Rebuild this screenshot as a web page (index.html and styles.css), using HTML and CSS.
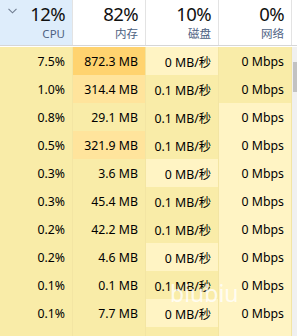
FILE: index.html
```html
<!DOCTYPE html>
<html lang="zh-CN">
<head>
    <meta charset="UTF-8">
    <meta name="viewport" content="width=device-width, initial-scale=1.0">
    <title>任务管理器 - 进程</title>
    <link rel="stylesheet" href="styles.css">
</head>
<body>
    <div class="table">
        <div class="head">
            <div class="head-cell sorted">
                <svg class="chevron" width="9" height="6" viewBox="0 0 9 6">
                    <path d="M0.5 0.8 L4.5 4.8 L8.5 0.8" fill="none" stroke="#6f7c90" stroke-width="1.1"/>
                </svg>
                <span class="pct">12%</span>
                <span class="label">CPU</span>
            </div>
            <div class="head-cell">
                <span class="pct">82%</span>
                <span class="label">内存</span>
            </div>
            <div class="head-cell">
                <span class="pct">10%</span>
                <span class="label">磁盘</span>
            </div>
            <div class="head-cell">
                <span class="pct">0%</span>
                <span class="label">网络</span>
            </div>
            <div class="head-rest"></div>
        </div>

        <div class="body">
            <div class="rows">
                <div class="row">
                    <div class="cell h1">7.5%</div>
                    <div class="cell h3">872.3 MB</div>
                    <div class="cell h0">0 MB/秒</div>
                    <div class="cell h1">0 Mbps</div>
                </div>
                <div class="row">
                    <div class="cell h1">1.0%</div>
                    <div class="cell h2">314.4 MB</div>
                    <div class="cell h1">0.1 MB/秒</div>
                    <div class="cell h1">0 Mbps</div>
                </div>
                <div class="row">
                    <div class="cell h1">0.8%</div>
                    <div class="cell h1">29.1 MB</div>
                    <div class="cell h1">0.1 MB/秒</div>
                    <div class="cell h0">0 Mbps</div>
                </div>
                <div class="row">
                    <div class="cell h1">0.5%</div>
                    <div class="cell h2">321.9 MB</div>
                    <div class="cell h1">0.1 MB/秒</div>
                    <div class="cell h0">0 Mbps</div>
                </div>
                <div class="row">
                    <div class="cell h1">0.3%</div>
                    <div class="cell h1">3.6 MB</div>
                    <div class="cell h0">0 MB/秒</div>
                    <div class="cell h0">0 Mbps</div>
                </div>
                <div class="row">
                    <div class="cell h1">0.3%</div>
                    <div class="cell h1">45.4 MB</div>
                    <div class="cell h1">0.1 MB/秒</div>
                    <div class="cell h0">0 Mbps</div>
                </div>
                <div class="row">
                    <div class="cell h1">0.2%</div>
                    <div class="cell h1">42.2 MB</div>
                    <div class="cell h1">0.1 MB/秒</div>
                    <div class="cell h0">0 Mbps</div>
                </div>
                <div class="row">
                    <div class="cell h1">0.2%</div>
                    <div class="cell h1">4.6 MB</div>
                    <div class="cell h0">0 MB/秒</div>
                    <div class="cell h0">0 Mbps</div>
                </div>
                <div class="row">
                    <div class="cell h1">0.1%</div>
                    <div class="cell h1">0.1 MB</div>
                    <div class="cell h1">0.1 MB/秒</div>
                    <div class="cell h0">0 Mbps</div>
                </div>
                <div class="row">
                    <div class="cell h1">0.1%</div>
                    <div class="cell h1">7.7 MB</div>
                    <div class="cell h0">0 MB/秒</div>
                    <div class="cell h0">0 Mbps</div>
                </div>
                <div class="row">
                    <div class="cell h1">0.1%</div>
                    <div class="cell h1">1.2 MB</div>
                    <div class="cell h1">0.1 MB/秒</div>
                    <div class="cell h0">0 Mbps</div>
                </div>
            </div>
            <div class="scrollbar">
                <div class="thumb"></div>
            </div>
        </div>
    </div>

    <div class="watermark">biubiu</div>
</body>
</html>
```

FILE: styles.css
```css
:root {
    --heat-0: #fff4c4;
    --heat-1: #f9eca8;
    --heat-2: #ffe49c;
    --heat-3: #ffd36f;
    --sorted-bg: #deedfb;
    --label-color: #4d6182;
    --line-color: #e3e3e3;
}

* {
    margin: 0;
    padding: 0;
    box-sizing: border-box;
}

body {
    width: 297px;
    height: 336px;
    overflow: hidden;
    background: #ffffff;
    color: #000000;
    font-family: "Noto Sans", "Noto Sans CJK SC", sans-serif;
    position: relative;
}

.head {
    display: grid;
    grid-template-columns: 73px 73px 73px 73px 1fr;
    height: 46px;
    border-bottom: 1px solid #d6d6d6;
}

.head-cell {
    position: relative;
    display: flex;
    flex-direction: column;
    align-items: flex-end;
    padding: 1px 7px 0 0;
    border-right: 1px solid var(--line-color);
}

.head-cell.sorted {
    background: var(--sorted-bg);
}

.chevron {
    position: absolute;
    left: 8px;
    top: 8px;
}

.pct {
    font-size: 18.5px;
    letter-spacing: -0.6px;
    line-height: 25px;
    color: #111111;
}

.label {
    font-size: 11.5px;
    line-height: 16px;
    color: var(--label-color);
}

.body {
    display: flex;
    padding-top: 1px;
}

.rows {
    width: 292px;
}

.row {
    display: grid;
    grid-template-columns: 73px 73px 73px 73px;
    height: 28px;
}

.cell {
    display: flex;
    align-items: center;
    justify-content: flex-end;
    padding: 1px 7px 0 0;
    font-size: 12.3px;
    white-space: nowrap;
    border-right: 1px solid #f3e5a3;
}

.h0 { background: var(--heat-0); }
.h1 { background: var(--heat-1); }
.h2 { background: var(--heat-2); }
.h3 { background: var(--heat-3); }

.scrollbar {
    flex: 1;
    background: #f0f0f0;
    padding-top: 15px;
}

.thumb {
    margin-left: 1px;
    height: 30px;
    background: #c2c2c2;
}

.watermark {
    position: absolute;
    left: 170px;
    top: 277px;
    font-size: 23px;
    color: rgba(255, 255, 255, 0.8);
    pointer-events: none;
}
```
